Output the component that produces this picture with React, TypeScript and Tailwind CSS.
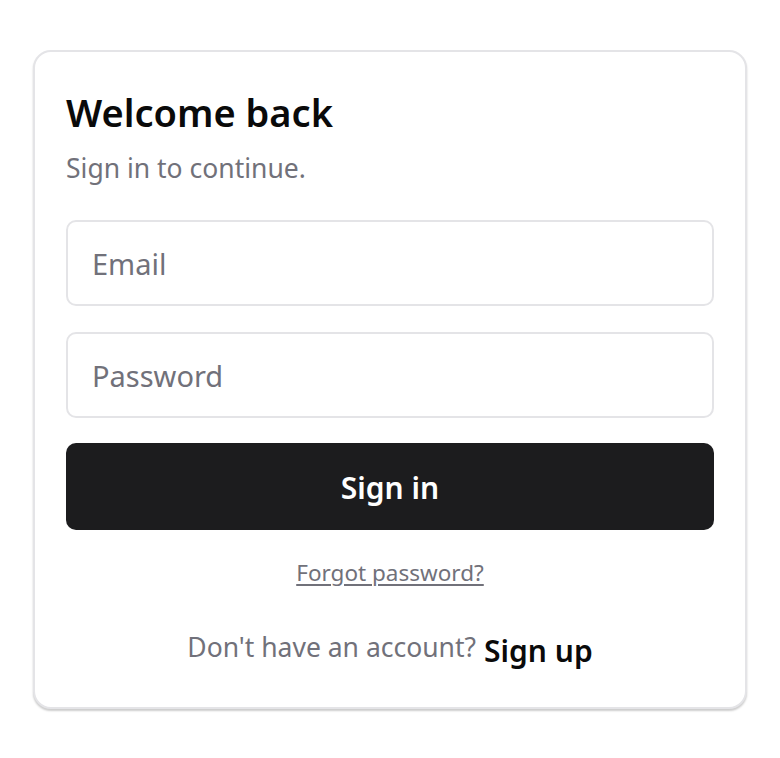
import React from "react";

export default function App() {
  return (
    <div
      className="min-h-screen flex items-center justify-center bg-white"
      style={{ fontFamily: '"Noto Sans", "Open Sans", sans-serif' }}
    >
      <div className="w-[714px] rounded-[18px] border-2 border-[#e4e4e7] bg-white px-[31px] pt-[37px] pb-[38px] shadow-[0_2px_2px_rgba(0,0,0,0.2)]">
        <h1 className="text-[38px] leading-[46px] font-semibold text-[#0a0a0a]">Welcome back</h1>
        <p className="mt-[15px] text-[26.5px] leading-[36px] text-[#71717a]">Sign in to continue.</p>
        <form className="mt-[34px] flex flex-col" onSubmit={(e) => e.preventDefault()}>
          <input
            type="email"
            placeholder="Email"
            className="h-[86px] w-full rounded-[10px] border-2 border-[#e4e4e7] px-[24px] pt-[2px] text-[29px] text-[#0a0a0a] placeholder:text-[#71717a] outline-none"
          />
          <input
            type="password"
            placeholder="Password"
            className="mt-[26px] h-[86px] w-full rounded-[10px] border-2 border-[#e4e4e7] px-[24px] pt-[2px] text-[29px] text-[#0a0a0a] placeholder:text-[#71717a] outline-none"
          />
          <button
            type="submit"
            className="mt-[25px] h-[87px] w-full rounded-[10px] bg-[#1c1c1e] pt-[2px] text-[30px] font-semibold text-white"
          >
            Sign in
          </button>
        </form>
        <div className="mt-[28px] flex justify-center">
          <a href="#" className="text-[22.5px] leading-[30px] text-[#71717a] underline underline-offset-[3px]">
            Forgot password?
          </a>
        </div>
        <div className="mt-[41px] flex items-start justify-center gap-[8px]">
          <span className="text-[26.5px] leading-[36px] text-[#71717a]">Don't have an account?</span>
          <button type="button" className="mt-[4px] text-[30px] leading-[36px] font-semibold text-[#0a0a0a]">
            Sign up
          </button>
        </div>
      </div>
    </div>
  );
}
